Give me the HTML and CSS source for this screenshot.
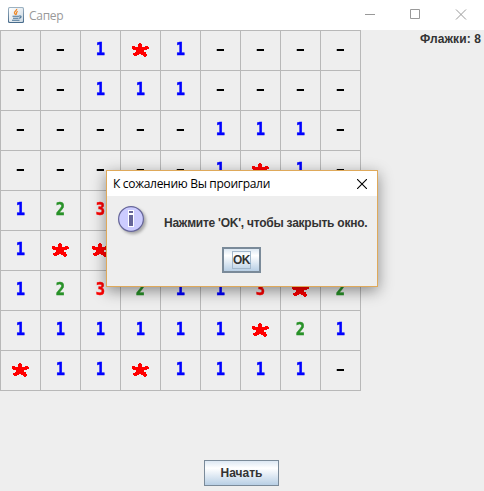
FILE: index.html
```
<!DOCTYPE html>
<html lang="ru">
<head>
<meta charset="utf-8">
<title>Сапер</title>
<link rel="stylesheet" href="styles.css">
</head>
<body>
<svg class="defs" width="0" height="0">
  <symbol id="mine" viewBox="0 0 17 14">
    <path d="M7 0H9V1H10V4H13V3H16V4H17V6H15V7H12V9H14V11H15V13H14V14H12V13H11V12H9V11H7V12H5V13H2V12H1V10H3V9H4V7H1V6H0V3H3V4H6V1H7Z" fill="#f00"/>
  </symbol>
</svg>
<header class="titlebar">
  <svg class="app-icon" width="16" height="16" viewBox="0 0 16 16">
    <defs><linearGradient id="tile" x2="0" y2="1"><stop stop-color="#9fb4c4"/><stop offset="1" stop-color="#45698a"/></linearGradient>
    <linearGradient id="face" x2="1" y2="1"><stop stop-color="#fff"/><stop offset="1" stop-color="#cdd9e2"/></linearGradient></defs>
    <rect width="16" height="16" rx="1.5" fill="url(#tile)"/>
    <rect x="1" y="1" width="14" height="14" rx="1" fill="url(#face)"/>
    <path d="M8.7 1.8C9 3.8 5.8 4.3 6.5 6.2L7.7 8M9.7 4.2C7.5 5.5 8.8 6 8.4 7.6" fill="none" stroke="#ee8a2b" stroke-width="1.3"/>
    <path d="M4.5 9.2H11M5 11.2H10.5M4 13.3H11.5M11 9C14 8.5 13.5 11 11 11.2" fill="none" stroke="#4c7597" stroke-width="1.1"/>
  </svg>
  <h1>Сапер</h1>
  <svg class="controls" width="103" height="12" viewBox="0 0 103 12" fill="none" stroke="#999">
    <path d="M0 5.5H10M45.5.5H54.5V9.5H45.5Z"/>
    <path d="M91 .5L101 10.5M101 .5L91 10.5"/>
  </svg>
</header>
<main>
  <div class="board" id="board"></div>
  <div class="flags">Флажки: 8</div>
</main>
<footer><button class="start">Начать</button></footer>
<section class="dialog">
  <div class="dialog-title">
    <span>К сожалению Вы проиграли</span>
    <svg width="10" height="10" viewBox="0 0 10 10"><path d="M0 0L10 10M10 0L0 10" stroke="#000" stroke-width="1.1"/></svg>
  </div>
  <div class="message">
    <svg class="info" width="32" height="32" viewBox="0 0 32 32">
      <circle cx="13" cy="13" r="12.4" fill="#ccf" stroke="#669" stroke-width="1.2"/>
      <path d="M10 4H16V21H10Z" fill="#fff"/>
      <path d="M11 5H15V7H11ZM11 9H15V20H11Z" fill="#669"/>
    </svg>
    <p>Нажмите 'OK', чтобы закрыть окно.</p>
  </div>
  <button class="ok"><span>OK</span></button>
</section>
<script src="board.js"></script>
</body>
</html>
```
FILE: styles.css
```
* { box-sizing: border-box; }
body {
  position: relative;
  margin: 0;
  width: 484px;
  height: 491px;
  overflow: hidden;
  display: flex;
  flex-direction: column;
  background: #eee;
  font: bold 12px "Liberation Sans", Arial, sans-serif;
  color: #333;
}
.defs { position: absolute; }
.titlebar {
  height: 30px;
  flex: none;
  display: flex;
  align-items: center;
  padding: 0 16px 0 8px;
  background: #fff;
}
.titlebar h1 {
  margin: 0 auto 0 5px;
  font: 12px "Open Sans", "Noto Sans", sans-serif;
  letter-spacing: -.3px;
  color: #999;
}
main { display: flex; justify-content: space-between; align-items: flex-start; }
.board {
  display: grid;
  grid-template-columns: repeat(9, 40px);
  grid-auto-rows: 40px;
  border: solid #b8b8b8;
  border-width: 1px 0 0 1px;
}
.cell {
  display: flex;
  align-items: center;
  justify-content: center;
  padding: 0 1px 3px 0;
  border: solid #b8b8b8;
  border-width: 0 1px 1px 0;
  font: bold 17.5px/20px "DejaVu Sans Mono", monospace;
  color: #000;
}
.digit { transform: scaleX(.88); -webkit-text-stroke: .5px currentColor; }
.n1 { color: #00f; }
.n2 { color: #289128; }
.n3 { color: #f00; }
.dash { transform: scale(1.35, .8); }
.mine { width: 17px; height: 14px; margin-top: 2px; shape-rendering: crispEdges; }
.flags { padding: 2px 3px 0 0; line-height: 14px; letter-spacing: .1px; }
footer { display: flex; justify-content: center; margin: auto 1px 5px 0; }
button {
  padding: 0;
  height: 26px;
  border: 1px solid #7a8a99;
  border-radius: 0;
  background: linear-gradient(#dde8f3, #fff 30%, #b8cfe5);
  font: inherit;
  color: #333;
}
.start { width: 75px; }
.dialog {
  position: absolute;
  left: 106px;
  top: 170px;
  width: 272px;
  height: 117px;
  display: flex;
  flex-direction: column;
  border: 1px solid #dfa95a;
  background: #eee;
  box-shadow: 0 4px 14px rgba(0, 0, 0, .42);
}
.dialog-title {
  height: 25px;
  flex: none;
  display: flex;
  align-items: center;
  justify-content: space-between;
  padding: 0 10px 0 6px;
  background: #fff;
  font: 12px "Open Sans", "Noto Sans", sans-serif;
  letter-spacing: -.3px;
  color: #000;
}
.message { display: flex; height: 51px; padding: 10px 0 0 11px; }
.message p { margin: 10px 0 0 14px; line-height: 14px; white-space: nowrap; letter-spacing: -.24px; }
.info { filter: drop-shadow(2px 2px 1.5px rgba(0, 0, 0, .3)); }
.ok { width: 39px; margin-left: 115px; border-width: 2px; display: flex; align-items: center; justify-content: center; }
.ok span { width: 19px; height: 18px; line-height: 17px; border: 1px solid #a3b8cc; display: flex; justify-content: center; letter-spacing: -.5px; }
```
FILE: board.js
```
const rows = [
  "--1*1----",
  "--111----",
  "-----111-",
  "-----1*1-",
  "123      ",
  "1**      ",
  "1232113*2",
  "111111*21",
  "*11*1111-"
];
const board = document.getElementById("board");
for (const value of rows.join("")) {
  const cell = document.createElement("div");
  cell.className = "cell n" + value;
  if (value === "*") {
    cell.innerHTML = '<svg class="mine"><use href="#mine"/></svg>';
  } else {
    const label = document.createElement("span");
    label.className = value === "-" ? "dash" : "digit";
    label.textContent = value;
    cell.append(label);
  }
  board.append(cell);
}
```
